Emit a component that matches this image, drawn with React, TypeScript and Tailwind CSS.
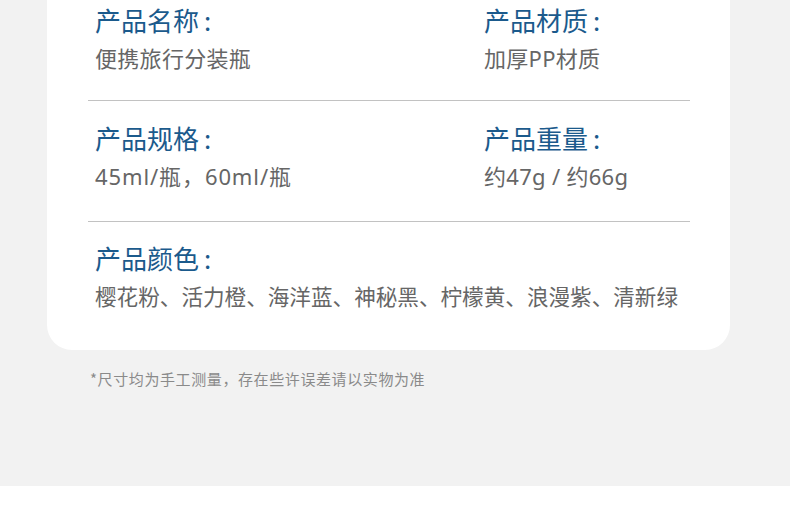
import React from "react";

const font = { fontFamily: '"Noto Sans CJK SC", "Noto Sans", sans-serif' };
const valueFont = { fontFamily: '"Noto Sans", "Noto Sans CJK SC", sans-serif' };

function Field({
  title,
  value,
  valueClass = "mt-[8px] text-[22px] tracking-[0.3px]",
}: {
  title: string;
  value: string;
  valueClass?: string;
}) {
  return (
    <div className="flex flex-col">
      <div className="text-[26px] leading-[30px] text-[#1b5a8c]">
        {title}
        <span className="ml-[5px]">:</span>
      </div>
      <div
        className={"leading-[30px] whitespace-nowrap text-[#666666] " + valueClass}
        style={valueFont}
      >
        {value}
      </div>
    </div>
  );
}

export default function App() {
  return (
    <div className="w-[790px] h-[522px] bg-white overflow-hidden" style={font}>
      <div className="h-[486px] bg-[#f2f2f2] flex flex-col">
        <div className="mx-[47px] w-[683px] bg-white rounded-b-[25px] pl-[41px] pr-[40px] pt-[5px] pb-[38px]">
          <div className="grid grid-cols-[389px_1fr] pl-[7px] pb-[27px]">
            <Field title="产品名称" value="便携旅行分装瓶" />
            <Field title="产品材质" value="加厚PP材质" />
          </div>
          <div className="h-px bg-[#c2c2c2]" />
          <div className="grid grid-cols-[389px_1fr] pl-[7px] pt-[22px] pb-[30px]">
            <Field
              title="产品规格"
              value="45ml/瓶，60ml/瓶"
              valueClass="mt-[8px] text-[22px] tracking-[0.9px]"
            />
            <Field title="产品重量" value="约47g / 约66g" />
          </div>
          <div className="h-px bg-[#c2c2c2]" />
          <div className="pl-[7px] pt-[21px]">
            <Field
              title="产品颜色"
              value="樱花粉、活力橙、海洋蓝、神秘黑、柠檬黄、浪漫紫、清新绿"
              valueClass="mt-[9px] text-[21.6px] tracking-[0px]"
            />
          </div>
        </div>
        <div className="mt-[19px] pl-[90px] text-[15px] leading-[20px] tracking-[0.6px] text-[#8a8a8a]">
          *尺寸均为手工测量，存在些许误差请以实物为准
        </div>
      </div>
    </div>
  );
}
